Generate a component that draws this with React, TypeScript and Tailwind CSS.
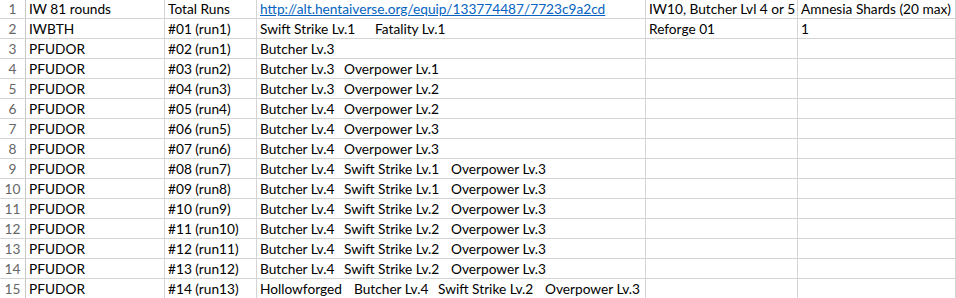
type Cell = string | { parts: [string, string][] } | { link: string };

// [text, fixed width class] — widths keep the column stops of the sheet
const seg = (...parts: [string, string][]) => ({ parts });

const r9 = seg(["Butcher Lv.4", "w-[84px]"], ["Swift Strike Lv.1", "w-[107px]"], ["Overpower Lv.3", ""]);
const r11 = seg(["Butcher Lv.4", "w-[84px]"], ["Swift Strike Lv.2", "w-[107px]"], ["Overpower Lv.3", ""]);

const rows: Cell[][] = [
  ["IW 81 rounds", "Total Runs", { link: "http://alt.hentaiverse.org/equip/133774487/7723c9a2cd" }, "IW10, Butcher Lvl 4 or 5", "Amnesia Shards (20 max)"],
  ["IWBTH", "#01 (run1)", seg(["Swift Strike Lv.1", "w-[115px]"], ["Fatality Lv.1", ""]), "Reforge 01", "1"],
  ["PFUDOR", "#02 (run1)", "Butcher Lv.3", "", ""],
  ["PFUDOR", "#03 (run2)", seg(["Butcher Lv.3", "w-[84px]"], ["Overpower Lv.1", ""]), "", ""],
  ["PFUDOR", "#04 (run3)", seg(["Butcher Lv.3", "w-[84px]"], ["Overpower Lv.2", ""]), "", ""],
  ["PFUDOR", "#05 (run4)", seg(["Butcher Lv.4", "w-[84px]"], ["Overpower Lv.2", ""]), "", ""],
  ["PFUDOR", "#06 (run5)", seg(["Butcher Lv.4", "w-[84px]"], ["Overpower Lv.3", ""]), "", ""],
  ["PFUDOR", "#07 (run6)", seg(["Butcher Lv.4", "w-[84px]"], ["Overpower Lv.3", ""]), "", ""],
  ["PFUDOR", "#08 (run7)", r9, "", ""],
  ["PFUDOR", "#09 (run8)", r9, "", ""],
  ["PFUDOR", "#10 (run9)", r11, "", ""],
  ["PFUDOR", "#11 (run10)", r11, "", ""],
  ["PFUDOR", "#12 (run11)", r11, "", ""],
  ["PFUDOR", "#13 (run12)", r11, "", ""],
  [
    "PFUDOR",
    "#14 (run13)",
    seg(["Hollowforged", "w-[94px]"], ["Butcher Lv.4", "w-[84px]"], ["Swift Strike Lv.2", "w-[107px]"], ["Overpower Lv.3", ""]),
    "",
    "",
  ],
];

const widths = ["w-[139px]", "w-[92px]", "w-[389px]", "w-[152px]", "w-[158px]"];

function CellBody({ c }: { c: Cell }) {
  if (typeof c === "string") return <>{c}</>;
  if ("link" in c) return <span className="text-[#0563c1] underline">{c.link}</span>;
  return (
    <>
      {c.parts.map(([t, w], k) => (
        <span key={k} className={`inline-block ${w}`}>
          {t}
        </span>
      ))}
    </>
  );
}

export default function App() {
  return (
    <div
      className="w-[956px] h-[298px] overflow-hidden bg-white text-[13.7px] text-black"
      style={{ fontFamily: "Lato, 'Liberation Sans', sans-serif" }}
    >
      <div className="-mt-[1px] flex flex-col">
        {rows.map((r, i) => (
          <div key={i} className="flex h-[20px] border-b border-[#d4d4d4]">
            <div className="w-[26px] shrink-0 border-r border-[#c8c8c8] text-center text-[#666] leading-[20px]">
              {i + 1}
            </div>
            {r.map((c, j) => (
              <div
                key={j}
                className={`${widths[j]} shrink-0 border-r border-[#d4d4d4] pl-[3px] leading-[20px] whitespace-nowrap`}
              >
                <CellBody c={c} />
              </div>
            ))}
          </div>
        ))}
      </div>
    </div>
  );
}
